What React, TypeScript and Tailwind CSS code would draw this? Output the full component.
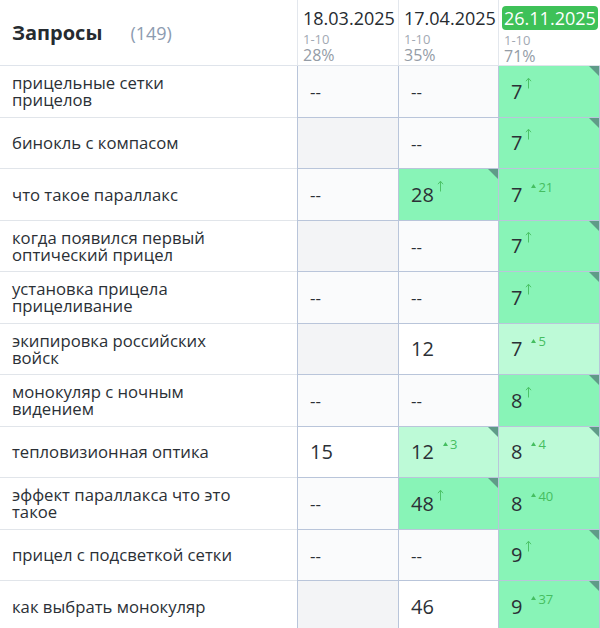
import React from "react";

type Cell =
  | { kind: "empty" }
  | { kind: "dash" }
  | {
      kind: "num";
      value: string;
      tone?: "white" | "green" | "light";
      up?: "arrow" | string;
      corner?: boolean;
    };

interface Row {
  query: string;
  cells: [Cell, Cell, Cell];
}

const E: Cell = { kind: "empty" };
const D: Cell = { kind: "dash" };

const rows: Row[] = [
  { query: "прицельные сетки прицелов", cells: [D, D, { kind: "num", value: "7", tone: "green", up: "arrow", corner: true }] },
  { query: "бинокль с компасом", cells: [E, D, { kind: "num", value: "7", tone: "green", up: "arrow", corner: true }] },
  {
    query: "что такое параллакс",
    cells: [
      D,
      { kind: "num", value: "28", tone: "green", up: "arrow", corner: true },
      { kind: "num", value: "7", tone: "green", up: "21" },
    ],
  },
  { query: "когда появился первый оптический прицел", cells: [E, D, { kind: "num", value: "7", tone: "green", up: "arrow", corner: true }] },
  { query: "установка прицела прицеливание", cells: [D, D, { kind: "num", value: "7", tone: "green", up: "arrow", corner: true }] },
  {
    query: "экипировка российских войск",
    cells: [E, { kind: "num", value: "12" }, { kind: "num", value: "7", tone: "light", up: "5" }],
  },
  { query: "монокуляр с ночным видением", cells: [D, D, { kind: "num", value: "8", tone: "green", up: "arrow", corner: true }] },
  {
    query: "тепловизионная оптика",
    cells: [
      { kind: "num", value: "15" },
      { kind: "num", value: "12", tone: "light", up: "3", corner: true },
      { kind: "num", value: "8", tone: "light", up: "4", corner: true },
    ],
  },
  {
    query: "эффект параллакса что это такое",
    cells: [
      D,
      { kind: "num", value: "48", tone: "green", up: "arrow", corner: true },
      { kind: "num", value: "8", tone: "green", up: "40" },
    ],
  },
  { query: "прицел с подсветкой сетки", cells: [D, D, { kind: "num", value: "9", tone: "green", up: "arrow", corner: true }] },
  {
    query: "как выбрать монокуляр",
    cells: [E, { kind: "num", value: "46" }, { kind: "num", value: "9", tone: "green", up: "37", corner: true }],
  },
];

const widths = ["w-[101px]", "w-[100px]", "w-[101px]"];

function UpArrow() {
  return (
    <svg width="7" height="12" viewBox="0 0 7 12" className="mt-[1px]">
      <path d="M3.5 11.5V1.5M1 4.2L3.5 1.2L6 4.2" fill="none" stroke="#4cc468" strokeWidth="1" />
    </svg>
  );
}

function Delta({ n }: { n: string }) {
  return (
    <span className="ml-[9px] flex items-center gap-[2px] text-[13px] leading-none text-[#45be60]">
      <svg width="5" height="4" viewBox="0 0 5 4" className="mb-[2px]">
        <path d="M2.5 0L5 4H0Z" fill="#45be60" />
      </svg>
      {n}
    </span>
  );
}

function DataCell({ cell, w }: { cell: Cell; w: string }) {
  const base = `relative h-full ${w} shrink-0 border-l border-[#b9c5da] flex items-center pl-[12px]`;
  if (cell.kind === "empty") return <div className={`${base} bg-[#f3f4f6]`} />;
  if (cell.kind === "dash")
    return (
      <div className={`${base} bg-[#fafbfc] text-[17px] text-[#2b3036]`}>
        <span className="pt-[1px]">--</span>
      </div>
    );
  const bg = cell.tone === "green" ? "bg-[#88f4b7]" : cell.tone === "light" ? "bg-[#bdfad7]" : "bg-white";
  return (
    <div className={`${base} ${bg}`}>
      <div className="flex items-start pt-[1px]">
        <span className="text-[20px] leading-[26px] text-[#2b3036]">{cell.value}</span>
        {cell.up === "arrow" && (
          <span className="ml-[3px] -mt-[3px]">
            <UpArrow />
          </span>
        )}
        {cell.up && cell.up !== "arrow" && (
          <span className="-mt-[1px]">
            <Delta n={cell.up} />
          </span>
        )}
      </div>
      {cell.corner && (
        <svg width="10" height="10" viewBox="0 0 10 10" className="absolute right-0 top-0">
          <path d="M0 0H10V10Z" fill="#5f9b88" />
        </svg>
      )}
    </div>
  );
}

const dates = [
  { d: "18.03.2025", p: "28%" },
  { d: "17.04.2025", p: "35%" },
  { d: "26.11.2025", p: "71%", active: true },
];

export default function App() {
  return (
    <div className="w-[600px] h-[628px] overflow-hidden bg-white font-['Open_Sans',sans-serif]">
      {/* header */}
      <div className="flex h-[66px] border-b border-[#dfe4eb]">
        <div className="flex w-[297px] shrink-0 items-center pl-[12px] pt-[1px]">
          <span className="text-[20px] font-bold text-[#262b30]">Запросы</span>
          <span className="ml-[28px] text-[18px] text-[#8c9bb0]">(149)</span>
        </div>
        {dates.map((c, i) => (
          <div key={c.d} className={`${widths[i]} shrink-0 border-l border-[#e3e7ed] pl-[3px] pt-[6px]`}>
            <div
              className={
                c.active
                  ? "inline-block rounded-[4px] bg-[#3ec158] px-[2px] text-[18px] leading-[24px] text-white"
                  : "px-[2px] text-[18px] leading-[24px] text-[#262b30]"
              }
            >
              {c.d}
            </div>
            <div className="mt-[2px] pl-[2px] text-[13px] leading-[15px] text-[#a2a9b3]">1-10</div>
            <div className="pl-[2px] text-[16px] leading-[17px] text-[#949ca6]">{c.p}</div>
          </div>
        ))}
      </div>
      {rows.map((r) => (
        <div key={r.query} className="flex h-[51.5px]">
          <div className="flex w-[297px] shrink-0 items-center border-b border-[#e1e5ea] pl-[12px] pr-[57px] text-[16.7px] leading-[17px] text-[#2b3036]">
            {r.query}
          </div>
          <div className="flex border-b border-r border-[#b9c5da]">
            {r.cells.map((c, i) => (
              <DataCell key={i} cell={c} w={widths[i]} />
            ))}
          </div>
        </div>
      ))}
    </div>
  );
}
